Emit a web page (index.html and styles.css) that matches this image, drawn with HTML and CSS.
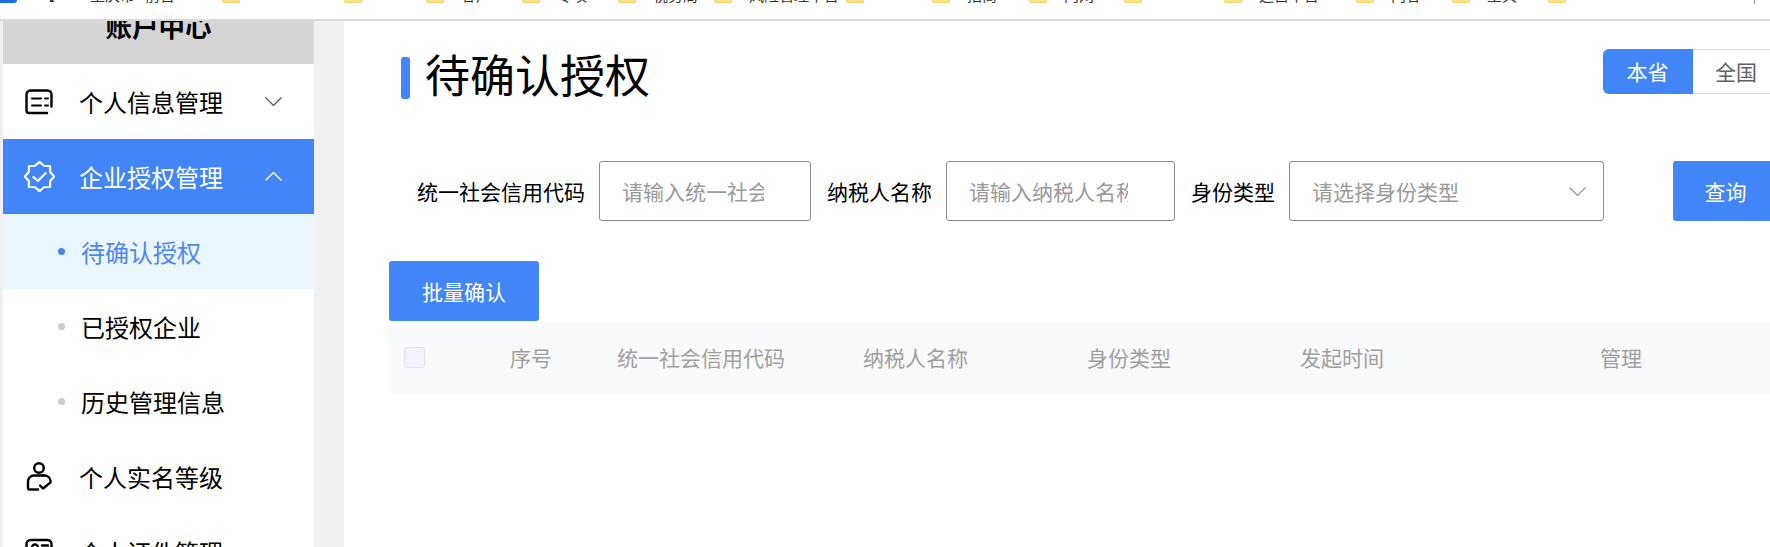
FILE: index.html
```html
<!DOCTYPE html>
<html lang="zh-CN">
<head>
<meta charset="utf-8">
<title>待确认授权</title>
<link rel="stylesheet" href="styles.css">
</head>
<body>
<div class="topbar">
  <span class="app-icon"></span>
  <span class="bracket">【</span>
  <span class="crumb crumb-a">重庆市</span>
  <span class="crumb crumb-b">前台</span>
  <div class="bm w122"><i class="folder"></i></div>
  <div class="bm w82"><i class="folder"></i></div>
  <div class="bm w96"><i class="folder"></i><span class="bm-text">客户</span></div>
  <div class="bm w96"><i class="folder"></i><span class="bm-text">专项</span></div>
  <div class="bm w96"><i class="folder"></i><span class="bm-text">税务局</span></div>
  <div class="bm w132"><i class="folder"></i><span class="bm-text">风险管理平台</span></div>
  <div class="bm w86"><i class="folder"></i></div>
  <div class="bm w97"><i class="folder"></i><span class="bm-text">招商</span></div>
  <div class="bm w95"><i class="folder"></i><span class="bm-text">内网</span></div>
  <div class="bm w100"><i class="folder"></i></div>
  <div class="bm w132"><i class="folder"></i><span class="bm-text">运营平台</span></div>
  <div class="bm w96"><i class="folder"></i><span class="bm-text">内容</span></div>
  <div class="bm w96"><i class="folder"></i><span class="bm-text">工具</span></div>
  <div class="bm w96"><i class="folder"></i></div>
  <span class="bar-divider"></span>
</div>
<div class="layout">
  <aside class="sidebar">
    <div class="side-head"><span class="side-title">账户中心</span></div>
    <div class="menu-row">
      <svg class="menu-icon" viewBox="0 0 28 26" fill="none" stroke="currentColor" stroke-width="2.400" stroke-linecap="round">
        <path d="M26.500 18V6a4 4 0 0 0-4-4H5.500a4 4 0 0 0-4 4v16a2.500 2.500 0 0 0 2.500 2.500H22"/>
        <path d="M7 10h9M20 10h3M7 17h9M20 17h3" stroke-width="2"/>
      </svg>
      <span>个人信息管理</span>
      <svg class="chev chev-down" viewBox="0 0 17 9" fill="none" stroke="currentColor" stroke-width="1.200"><path d="M.5.500l8 8 8-8"/></svg>
    </div>
    <div class="menu-row menu-row-active">
      <svg class="menu-icon menu-icon-badge" viewBox="0 0 28 28" fill="none" stroke="currentColor" stroke-width="2" stroke-linejoin="round" stroke-linecap="round">
        <path d="M14 .8L18 4.300 23.500 4.500 23.700 10 27.200 14 23.700 18 23.500 23.500 18 23.700 14 27.200 10 23.700 4.500 23.500 4.300 18 .8 14 4.300 10 4.500 4.500 10 4.300Z"/>
        <path d="M8.500 14.500l4 3.500 7-7"/>
      </svg>
      <span>企业授权管理</span>
      <svg class="chev" viewBox="0 0 17 9" fill="none" stroke="currentColor" stroke-width="1.400"><path d="M.5 8.500l8-8 8 8"/></svg>
    </div>
    <div class="sub-row sub-row-active"><i class="dot"></i><span>待确认授权</span></div>
    <div class="sub-row"><i class="dot"></i><span>已授权企业</span></div>
    <div class="sub-row"><i class="dot"></i><span>历史管理信息</span></div>
    <div class="menu-row">
      <svg class="menu-icon" viewBox="0 0 28 29" fill="none" stroke="currentColor" stroke-width="2.400" stroke-linecap="round" stroke-linejoin="round">
        <circle cx="14" cy="6" r="4.800"/>
        <path d="M18 13.500H9a6 6 0 0 0-6 6v6.500a1.500 1.500 0 0 0 1.500 1.500H13"/>
        <path d="M18 13.500h1.500a6 6 0 0 1 6 5.500"/>
        <path d="M15 23.500l3 3 7.500-6"/>
      </svg>
      <span>个人实名等级</span>
    </div>
    <div class="menu-row">
      <svg class="menu-icon" viewBox="0 0 28 26" fill="none" stroke="currentColor" stroke-width="2.400" stroke-linecap="round">
        <rect x="1.500" y="1.500" width="25" height="23" rx="4"/>
        <circle cx="10" cy="9" r="3"/>
        <path d="M17 7h6M18 13h5M5 20c1-4 9-4 10 0"/>
      </svg>
      <span>个人证件管理</span>
    </div>
  </aside>
  <main class="main">
    <div class="title-row">
      <div class="title"><i class="title-mark"></i><h1 class="title-text">待确认授权</h1></div>
      <div class="switch">
        <span class="switch-item switch-item-on">本省</span>
        <span class="switch-item">全国</span>
      </div>
    </div>
    <form class="filters">
      <label class="filter-label">统一社会信用代码</label>
      <input class="field field-code" placeholder="请输入统一社会信用代码">
      <label class="filter-label filter-next">纳税人名称</label>
      <input class="field field-name" placeholder="请输入纳税人名称">
      <label class="filter-label filter-next">身份类型</label>
      <div class="field field-select">
        <span class="select-text">请选择身份类型</span>
        <svg class="select-chev" viewBox="0 0 17 9" fill="none" stroke="currentColor" stroke-width="1.300"><path d="M.5.500l8 8 8-8"/></svg>
      </div>
      <button class="btn btn-query" type="button">查询</button>
    </form>
    <button class="btn btn-batch" type="button">批量确认</button>
    <div class="table-head">
      <div><span class="check"></span></div>
      <div>序号</div>
      <div>统一社会信用代码</div>
      <div>纳税人名称</div>
      <div>身份类型</div>
      <div>发起时间</div>
      <div>管理</div>
    </div>
  </main>
</div>
</body>
</html>
```
FILE: styles.css
```css
* { box-sizing: border-box; }
html, body { margin: 0; height: 547px; overflow: hidden; }
body {
  background: #f0f0f3;
  color: #000;
  font-family: "Noto Sans CJK SC", "Liberation Sans", sans-serif;
  font-size: 21px;
}

/* browser bookmark strip, cut off at the top */
.topbar {
  height: 21px;
  background: #fff;
  border-bottom: 2px solid #dadada;
  display: flex;
  overflow: hidden;
  position: relative;
}
.app-icon {
  width: 17px;
  height: 3px;
  background: #1b6fe6;
  border-radius: 0 0 6px 0;
  flex: none;
}
.bracket, .crumb, .bm-text {
  font-size: 15px;
  line-height: 20px;
  margin-top: -15px;
  color: #333;
  white-space: nowrap;
  flex: none;
}
.bracket { margin-left: 23px; width: 15px; }
.crumb-a { margin-left: 35px; width: 55px; }
.crumb-b { width: 77px; }
.bm { display: flex; flex: none; }
.folder {
  width: 18px;
  height: 3px;
  background: #ffe28a;
  border: 1px solid #f5d36e;
  border-top: 0;
  border-radius: 0 0 2px 2px;
  margin-right: 17px;
  flex: none;
}
.w82 { width: 82px; }
.w86 { width: 86px; }
.w95 { width: 95px; }
.w96 { width: 96px; }
.w97 { width: 97px; }
.w100 { width: 100px; }
.w122 { width: 122px; }
.w132 { width: 132px; }
.bar-divider {
  position: absolute;
  left: 1754px;
  top: 0;
  width: 1px;
  height: 4px;
  background: #999;
}

.layout { display: flex; height: 526px; }

/* sidebar */
.sidebar {
  width: 311px;
  margin-left: 3px;
  margin-right: 30px;
  background: #fff;
  flex: none;
  overflow: hidden;
  font-size: 24px;
}
.side-head {
  height: 43px;
  background: #d4d4d4;
  text-align: center;
  overflow: hidden;
}
.side-title {
  display: block;
  font-size: 26.500px;
  font-weight: 700;
  line-height: 30px;
  margin-top: -10px;
}
.menu-row {
  height: 75px;
  display: flex;
  align-items: center;
  padding-left: 22px;
  padding-right: 32px;
}
.menu-icon {
  width: 28px;
  height: 29px;
  margin-right: 26px;
  flex: none;
}
.menu-icon-badge {
  width: 31px;
  height: 31px;
  margin-left: -1px;
  margin-right: 24px;
}
.chev { width: 17px; height: 9px; margin-left: auto; flex: none; }
.chev-down { color: #555; }
.menu-row-active { background: #4285f8; color: #fff; }
.sub-row {
  height: 75px;
  display: flex;
  align-items: center;
  padding-left: 55px;
}
.dot {
  width: 7px;
  height: 7px;
  border-radius: 50%;
  background: #cbcbcb;
  margin-right: 16px;
  flex: none;
}
.sub-row-active { background: #eaf6fd; color: #4d87f3; }
.sub-row-active .dot { background: #4285f8; }

/* main */
.main {
  flex: 1;
  min-width: 0;
  background: #fff;
  padding-left: 45px;
  overflow: hidden;
}
.title-row {
  display: flex;
  justify-content: space-between;
  align-items: flex-start;
  width: 1379px;
  margin-left: 12px;
  padding-top: 28px;
}
.title { display: flex; align-items: center; margin-top: 8px; height: 42px; }
.title-mark {
  width: 9px;
  height: 42px;
  background: #4285f8;
  border-radius: 3px;
  margin-right: 15px;
}
.title-text {
  margin: 0 0 9px;
  font-size: 45px;
  font-weight: 400;
  line-height: 42px;
}
.switch { display: flex; height: 45px; flex: none; }
.switch-item {
  width: 87px;
  line-height: 43px;
  text-align: center;
  color: #606266;
  border: 1px solid #dcdfe6;
  border-left: 0;
}
.switch-item-on {
  width: 90px;
  background: #4285f8;
  border-color: #4285f8;
  color: #fff;
  border-radius: 6px 0 0 6px;
}

.filters {
  display: flex;
  align-items: center;
  height: 60px;
  margin: 62px 0 0 28px;
  width: 1400px;
}
.filter-label { margin-right: 14px; white-space: nowrap; flex: none; }
.filter-next { margin-left: 16px; }
.field {
  height: 60px;
  border: 1px solid #8c8c8c;
  border-radius: 3px;
  background: #fff;
  font: inherit;
  padding: 0 46px 0 22px;
  flex: none;
  outline: 0;
}
.field::placeholder { color: #9a9a9a; opacity: 1; }
.field-code { width: 212px; }
.field-name { width: 229px; }
.field-select {
  width: 315px;
  display: flex;
  align-items: center;
  justify-content: space-between;
  padding-right: 17px;
  color: #9a9a9a;
}
.select-text { white-space: nowrap; }
.select-chev { width: 17px; height: 9px; flex: none; }
.btn {
  height: 60px;
  border: 0;
  border-radius: 3px;
  background: #4285f8;
  color: #fff;
  font: inherit;
  padding: 0;
  flex: none;
}
.btn-query { width: 105px; margin-left: 69px; }
.btn-batch { width: 150px; margin-top: 40px; display: block; }

.table-head {
  height: 72px;
  width: 1381px;
  background: #f9fafc;
  color: #9f9f9f;
  padding-left: 15px;
  display: grid;
  grid-template-columns: 106px 107px 246px 224px 213px 300px 1fr;
  align-items: center;
  white-space: nowrap;
}
.check {
  display: block;
  width: 21px;
  height: 21px;
  background: #eff3fb;
  border: 1px solid #dfe3ee;
  border-radius: 3px;
}
```
